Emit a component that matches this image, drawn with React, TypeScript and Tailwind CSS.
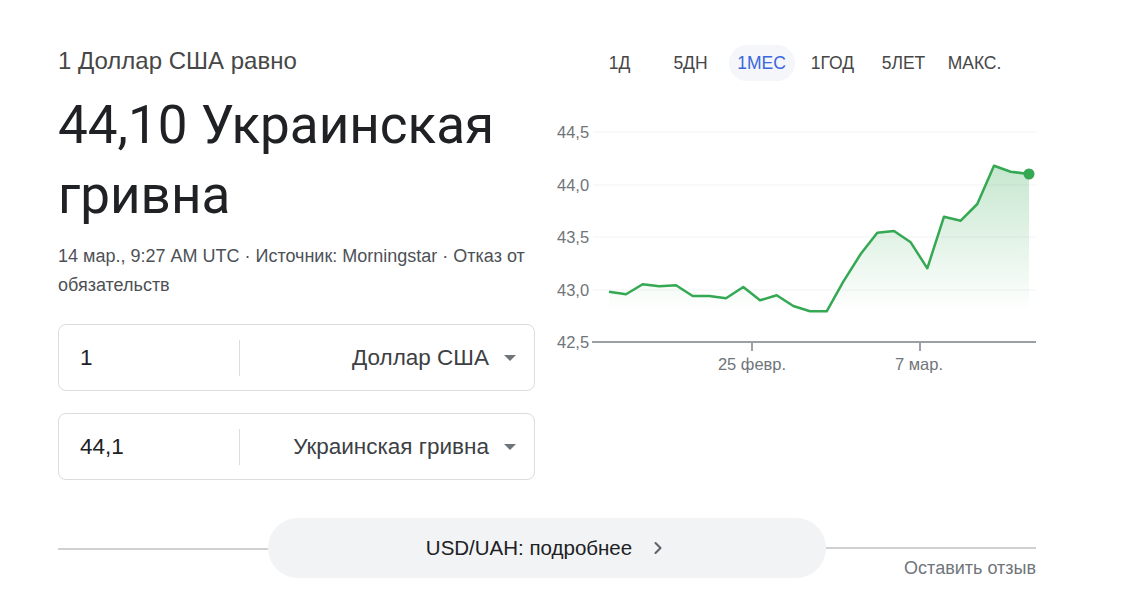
import { ChevronRight } from "lucide-react";

const tabs = ["1Д", "5ДН", "1МЕС", "1ГОД", "5ЛЕТ", "МАКС."];

const points: [number, number][] = [
  [609, 291.7], [626, 294.3], [642.7, 284.3], [659.3, 286.3], [676, 285.3],
  [692.7, 296], [709.3, 296], [726, 298.3], [743.3, 287], [760, 300.3],
  [776.7, 295.3], [793.3, 306], [810, 311.3], [826.7, 311.3], [843.3, 281.7],
  [860.7, 254], [877.3, 232.7], [894, 231], [910.7, 242.3], [927.3, 268.3],
  [944, 216.7], [960.7, 220.7], [977.3, 204], [994, 165.7], [1010.7, 171.7],
  [1029, 174],
];

const yLabels: [string, number][] = [
  ["44,5", 132],
  ["44,0", 185],
  ["43,5", 237],
  ["43,0", 290],
  ["42,5", 342],
];

function Chart() {
  const line = points.map(([x, y]) => `${x},${y}`).join(" ");
  const area = `609,312 ${line} 1029,312`;
  return (
    <svg
      width="481"
      height="280"
      viewBox="555 100 481 280"
      className="block"
      style={{ fontFamily: '"Liberation Sans", Arial, sans-serif' }}
    >
      <defs>
        <linearGradient id="fill" x1="0" y1="165" x2="0" y2="312" gradientUnits="userSpaceOnUse">
          <stop offset="0" stopColor="#34a853" stopOpacity="0.28" />
          <stop offset="1" stopColor="#34a853" stopOpacity="0" />
        </linearGradient>
      </defs>
      {yLabels.slice(0, 4).map(([, y]) => (
        <line key={y} x1="593" x2="1036" y1={y} y2={y} stroke="#f1f3f4" strokeWidth="1" />
      ))}
      {yLabels.map(([t, y]) => (
        <text key={t} x="557" y={y + 6} fontSize="16.5" fill="#70757a">
          {t}
        </text>
      ))}
      <polygon points={area} fill="url(#fill)" />
      <polyline points={line} fill="none" stroke="#34a853" strokeWidth="2.5" strokeLinejoin="round" />
      <circle cx="1029" cy="174" r="5.5" fill="#34a853" />
      <line x1="592" x2="1036" y1="342" y2="342" stroke="#9aa0a6" strokeWidth="2" />
      <line x1="752" x2="752" y1="342" y2="351" stroke="#9aa0a6" strokeWidth="2" />
      <line x1="920" x2="920" y1="342" y2="351" stroke="#9aa0a6" strokeWidth="2" />
      <text x="752" y="370" fontSize="16.5" fill="#70757a" textAnchor="middle">
        25 февр.
      </text>
      <text x="919" y="370" fontSize="16.5" fill="#70757a" textAnchor="middle">
        7 мар.
      </text>
    </svg>
  );
}

function CurrencyBox({ value, name }: { value: string; name: string }) {
  return (
    <div className="flex h-[67px] items-center rounded-lg border border-[#dadce0]">
      <div className="w-[180px] pl-[21px] text-[22.5px] text-[#202124]">{value}</div>
      <div className="h-[36px] w-px bg-[#dadce0]" />
      <div className="flex flex-1 items-center justify-end pr-[18px]">
        <span className="text-[22.5px] text-[#3c4043]">{name}</span>
        <span className="ml-[15px] h-0 w-0 border-x-[6px] border-t-[6px] border-x-transparent border-t-[#70757a]" />
      </div>
    </div>
  );
}

export default function App() {
  return (
    <div
      className="h-[607px] w-[1124px] overflow-hidden bg-white pl-[58px] pt-[45px]"
      style={{ fontFamily: '"Liberation Sans", Arial, sans-serif' }}
    >
      <div className="w-[978px]">
        <div className="flex">
          <div className="w-[477px]">
            <div className="text-[24px] leading-[32px] text-[#474747]">1 Доллар США равно</div>
            <div
              className="mt-[13px] text-[53px] leading-[70px] text-[#202124]"
              style={{ fontFamily: "Roboto, sans-serif" }}
            >
              44,10 Украинская гривна
            </div>
            <div className="mt-[12px] text-[18px] leading-[29px] text-[#4d5156]">
              14 мар., 9:27 AM UTC · Источник: Morningstar · Отказ от обязательств
            </div>
            <div className="mt-[24px] flex flex-col gap-[22px]">
              <CurrencyBox value="1" name="Доллар США" />
              <CurrencyBox value="44,1" name="Украинская гривна" />
            </div>
          </div>
          <div className="ml-[20px] flex-1">
            <div className="ml-[29px] flex">
              {tabs.map((t) => (
                <div key={t} className="flex w-[71px] justify-center">
                  <div
                    className={
                      t === "1МЕС"
                        ? "flex h-[36px] w-[66px] items-center justify-center rounded-full bg-[#f4f6fa] text-[17.5px] text-[#3b66df]"
                        : "flex h-[36px] w-[66px] items-center justify-center text-[17.5px] text-[#474747]"
                    }
                  >
                    {t}
                  </div>
                </div>
              ))}
            </div>
            <div className="mt-[19px]">
              <Chart />
            </div>
          </div>
        </div>

        <div className="mt-[38px] flex">
          <div className="flex flex-1 items-center">
            <div className="h-[2px] w-full bg-[#d0d0d0]" />
          </div>
          <div className="flex h-[60px] w-[558px] items-center justify-center rounded-full bg-[#f1f3f4] text-[20.5px] text-[#202124]">
            USD/UAH: подробнее
            <ChevronRight size={20} strokeWidth={2.5} className="ml-[16px] text-[#5f6368]" />
          </div>
          <div className="flex flex-1 flex-col pt-[29px]">
            <div className="h-[2px] w-full bg-[#d0d0d0]" />
            <div className="mt-[8px] text-right text-[18px] leading-[22px] text-[#70757a]">Оставить отзыв</div>
          </div>
        </div>
      </div>
    </div>
  );
}
